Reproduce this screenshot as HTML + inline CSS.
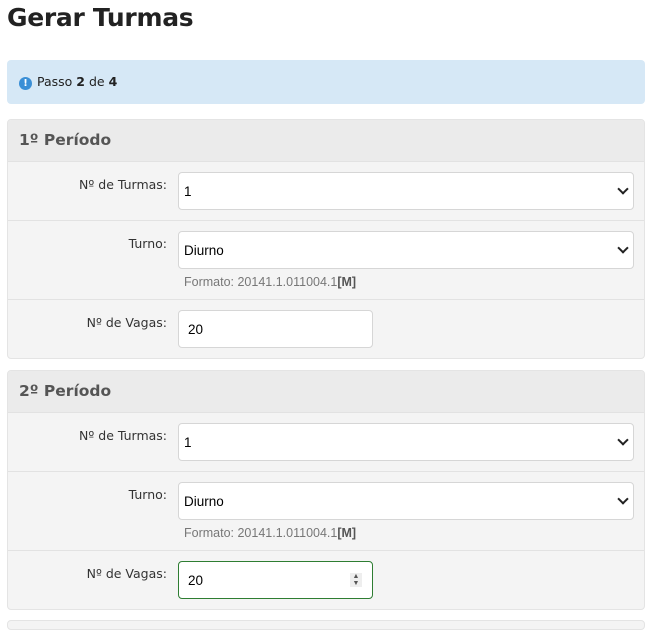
<!DOCTYPE html>
<html><head><meta charset="utf-8"><style>
*{box-sizing:border-box}
body{margin:0;width:660px;height:622px;overflow:hidden;background:#fff;font-family:"DejaVu Sans","Liberation Sans",sans-serif;color:#333}
h1{position:absolute;left:7px;top:3px;margin:0;font-size:25px;font-weight:bold;color:#222;letter-spacing:-0.3px}
.alert{position:absolute;left:7px;top:60px;width:638px;height:44px;background:#d6e8f6;border-radius:4px;font-size:12.5px;color:#222;padding:14px 0 0 30px}
.alert .ic{position:absolute;left:12px;top:17px;width:13px;height:13px;border-radius:50%;background:#3a8fd6;color:#fff;font-size:10px;font-weight:bold;text-align:center;line-height:13px}
.panel{position:absolute;left:7px;width:638px;height:240px;background:#f4f4f4;border:1px solid #e4e4e4;border-radius:4px;overflow:hidden}
.ph{height:41px;background:#ebebeb;font-weight:bold;font-size:15.5px;color:#555;padding:11px 0 0 11px}
.row{position:relative;border-top:1px solid #e2e2e2}
.lbl{position:absolute;right:477px;top:15px;font-size:12.5px;color:#333;text-align:right;white-space:nowrap}
.ctl{position:absolute;left:170px;top:10px;height:38px;background:#fff;border:1px solid #d6d6d6;border-radius:4px;font-family:"Liberation Sans",sans-serif;font-size:13.5px;color:#000;padding:11px 0 0 5px}
.sel{width:456px}
.sel:after{content:"";position:absolute;right:6px;top:12px;width:6px;height:6px;border-right:2px solid #222;border-bottom:2px solid #222;transform:rotate(45deg)}
.inp{width:195px;padding-left:9px}
.help{position:absolute;left:176px;top:54px;font-size:12.5px;color:#777;font-family:"Liberation Sans",sans-serif}
.help b{color:#555}
.green{border-color:#2e7d32}
.spin{position:absolute;right:10px;top:11px;width:12px;height:14px;background:#eee;font-size:7px;line-height:7px;text-align:center;color:#555}
</style></head><body>
<h1>Gerar Turmas</h1>
<div class="alert"><span class="ic">!</span>Passo <b>2</b> de <b>4</b></div>

<div class="panel" style="top:119px">
<div class="ph">1º Período</div>
<div class="row" style="height:59px"><span class="lbl">Nº de Turmas:</span><div class="ctl sel">1</div></div>
<div class="row" style="height:79px"><span class="lbl">Turno:</span><div class="ctl sel">Diurno</div><div class="help">Formato: 20141.1.011004.1<b>[M]</b></div></div>
<div class="row" style="height:59px"><span class="lbl">Nº de Vagas:</span><div class="ctl inp">20</div></div>
</div>

<div class="panel" style="top:370px">
<div class="ph">2º Período</div>
<div class="row" style="height:59px"><span class="lbl">Nº de Turmas:</span><div class="ctl sel">1</div></div>
<div class="row" style="height:79px"><span class="lbl">Turno:</span><div class="ctl sel">Diurno</div><div class="help">Formato: 20141.1.011004.1<b>[M]</b></div></div>
<div class="row" style="height:59px"><span class="lbl">Nº de Vagas:</span><div class="ctl inp green">20<span class="spin">▲<br>▼</span></div></div>
</div>
<div style="position:absolute;left:7px;top:620px;width:638px;height:10px;border:1px solid #e4e4e4;border-radius:4px;background:#f4f4f4"></div>
</body></html>
